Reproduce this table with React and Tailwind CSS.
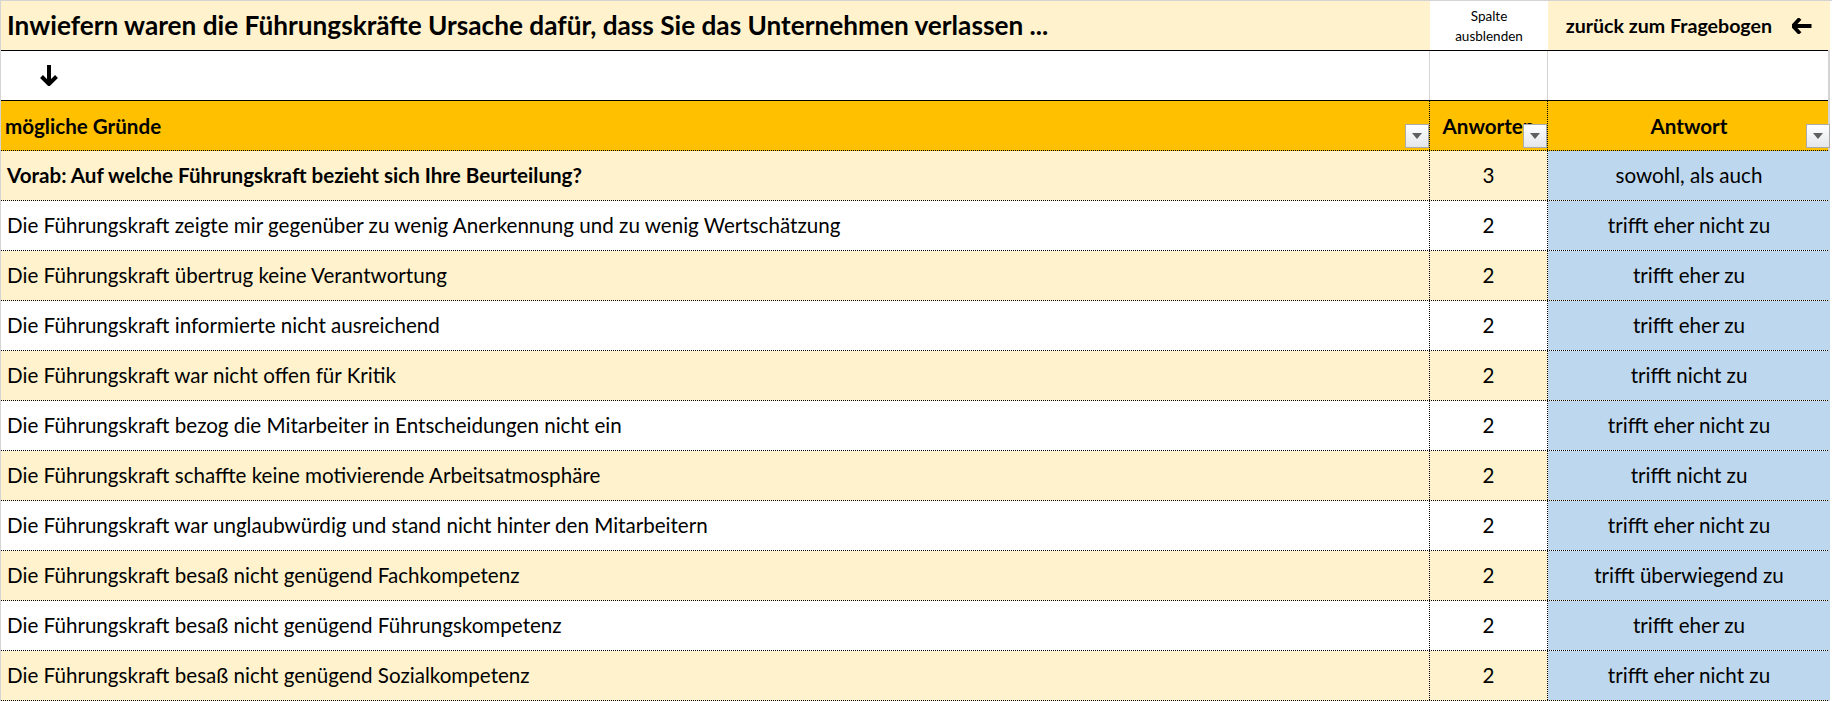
const rows = [
  { text: 'Vorab: Auf welche Führungskraft bezieht sich Ihre Beurteilung?', count: 3, answer: 'sowohl, als auch', bold: true },
  { text: 'Die Führungskraft zeigte mir gegenüber zu wenig Anerkennung und zu wenig Wertschätzung', count: 2, answer: 'trifft eher nicht zu' },
  { text: 'Die Führungskraft übertrug keine Verantwortung', count: 2, answer: 'trifft eher zu' },
  { text: 'Die Führungskraft informierte nicht ausreichend', count: 2, answer: 'trifft eher zu' },
  { text: 'Die Führungskraft war nicht offen für Kritik', count: 2, answer: 'trifft nicht zu' },
  { text: 'Die Führungskraft bezog die Mitarbeiter in Entscheidungen nicht ein', count: 2, answer: 'trifft eher nicht zu' },
  { text: 'Die Führungskraft schaffte keine motivierende Arbeitsatmosphäre', count: 2, answer: 'trifft nicht zu' },
  { text: 'Die Führungskraft war unglaubwürdig und stand nicht hinter den Mitarbeitern', count: 2, answer: 'trifft eher nicht zu' },
  { text: 'Die Führungskraft besaß nicht genügend Fachkompetenz', count: 2, answer: 'trifft überwiegend zu' },
  { text: 'Die Führungskraft besaß nicht genügend Führungskompetenz', count: 2, answer: 'trifft eher zu' },
  { text: 'Die Führungskraft besaß nicht genügend Sozialkompetenz', count: 2, answer: 'trifft eher nicht zu' },
];

const FilterButton = () => (
  <div className="absolute right-0 bottom-[2px] flex h-[24px] w-[24px] items-center justify-center border border-[#ababab] bg-gradient-to-b from-white to-[#e4e6ea]">
    <svg width="10" height="6" viewBox="0 0 10 6">
      <path d="M0 0h10L5 6z" fill="#5f5f5f" />
    </svg>
  </div>
);

const App = () => {
  return (
    <div className="h-[701px] w-[1832px] overflow-hidden border-t border-l border-[#d4d4d4] bg-white font-['Lato',sans-serif] text-[20.6px] text-black">
      <div className="w-[1829px] border-r-2 border-[#d4d4d4]">
        {/* title row */}
        <div className="grid h-[50px] grid-cols-[1429px_118px_282px] border-b border-black">
          <div className="flex items-center bg-[#fff2cc] pl-[6px] text-[26.2px] font-bold">
            Inwiefern waren die Führungskräfte Ursache dafür, dass Sie das Unternehmen verlassen ...
          </div>
          <div className="flex flex-col items-center justify-center bg-white text-[13.5px] leading-[20px]">
            <span>Spalte</span>
            <span>ausblenden</span>
          </div>
          <div className="flex items-center justify-end gap-[20px] bg-[#fff2cc] pr-[18px] text-[19.6px] font-bold">
            <span>zurück zum Fragebogen</span>
            <svg width="20" height="16" viewBox="0 0 20 16">
              <path d="M8 0.5 L1 8 L8 15.5 M1.5 8 H19.5" stroke="black" strokeWidth="3.8" fill="none" />
            </svg>
          </div>
        </div>

        {/* arrow row */}
        <div className="grid h-[50px] grid-cols-[1429px_118px_282px] border-b border-black">
          <div className="flex items-center border-r border-[#d4d4d4] pl-[39px]">
            <svg width="18" height="21" viewBox="0 0 18 21">
              <path d="M9 0 V19 M1.5 11.5 L9 19 L16.5 11.5" stroke="black" strokeWidth="4" fill="none" />
            </svg>
          </div>
          <div className="border-r border-[#d4d4d4]" />
          <div />
        </div>

        {/* header row */}
        <div className="grid h-[50px] grid-cols-[1429px_118px_282px] border-b border-dotted border-black bg-[#ffc000] font-bold">
          <div className="relative flex items-center border-r border-dotted border-black pl-[4px] pt-[2px]">
            mögliche Gründe
            <FilterButton />
          </div>
          <div className="relative flex items-center justify-center overflow-hidden border-r border-dotted border-black pt-[2px]">
            <span className="whitespace-nowrap">Anworten</span>
            <FilterButton />
          </div>
          <div className="relative flex items-center justify-center pt-[2px]">
            Antwort
            <FilterButton />
          </div>
        </div>

        {/* data rows */}
        {rows.map((row, i) => (
          <div
            key={i}
            className={`grid h-[50px] grid-cols-[1429px_118px_282px] border-b border-dotted border-black ${
              i % 2 === 0 ? 'bg-[#fff2cc]' : 'bg-white'
            }`}
          >
            <div className={`flex items-center border-r border-dotted border-black pl-[6px] ${row.bold ? 'font-bold' : ''}`}>
              {row.text}
            </div>
            <div className="flex items-center justify-center border-r border-dotted border-black">{row.count}</div>
            <div className="flex items-center justify-center bg-[#bdd7ee]">{row.answer}</div>
          </div>
        ))}
      </div>
    </div>
  );
};

export default App;
